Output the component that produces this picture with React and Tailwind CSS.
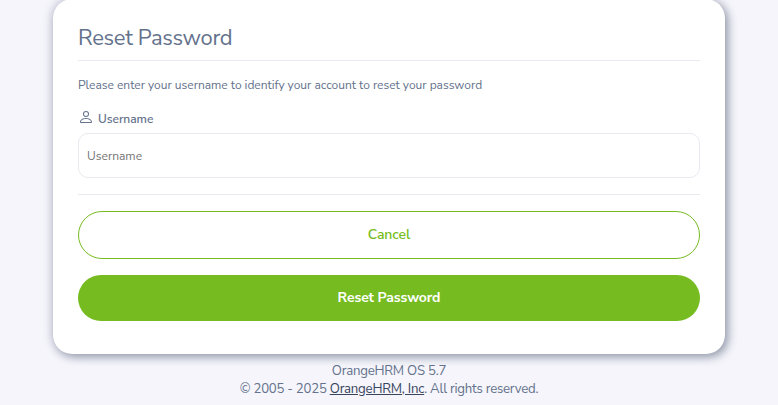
import { BsPerson } from "react-icons/bs";

export default function App() {
  return (
    <div className="flex h-[405px] flex-col overflow-hidden bg-[#f5f5fb] pl-[53px] font-['Nunito_Sans','Open_Sans',sans-serif] text-[#64728c]">
      <main className="-mt-px h-[355px] w-[672px] shrink-0 rounded-[19.2px] bg-white px-[25px] pt-[23px] shadow-[3px_3px_10px_#929baa,-2px_-1px_10px_#d5d3e2]">
        <h1 className="h-[39px] border-b border-[#e8eaef] text-[22px] leading-[32px] font-normal tracking-[-0.33px]">
          Reset Password
        </h1>
        <p className="mt-4 h-4 text-xs leading-4 tracking-[-0.014px] whitespace-nowrap">
          Please enter your username to identify your account to reset your password
        </p>
        <label className="mt-4 flex h-4 items-center gap-1 text-xs leading-4 font-semibold tracking-[-0.05px]" htmlFor="username">
          <BsPerson className="size-4" />
          <span className="pt-1">Username</span>
        </label>
        <input
          id="username"
          placeholder="Username"
          className="mt-2 block h-[45px] w-full rounded-[10px] border border-[#e8eaef] px-2 text-xs outline-none placeholder:text-[#757575]"
        />
        <hr className="mt-4 border-[#e8eaef]" />
        <button className="mt-4 block h-12 w-full rounded-full border border-[#76bc21] text-sm font-semibold tracking-[-0.08px] text-[#76bc21]">
          Cancel
        </button>
        <button className="mt-4 block h-[46px] w-full rounded-full bg-[#76bc21] text-sm font-bold tracking-[-0.1px] text-white">
          Reset Password
        </button>
      </main>
      <footer className="mt-2 w-[672px] text-center text-[13.2px] leading-[18px] tracking-[-0.23px]">
        <p>OrangeHRM OS 5.7</p>
        <p>
          © 2005 - 2025 <a className="text-[#38455d] underline">OrangeHRM, Inc</a>. All rights reserved.
        </p>
      </footer>
    </div>
  );
}
